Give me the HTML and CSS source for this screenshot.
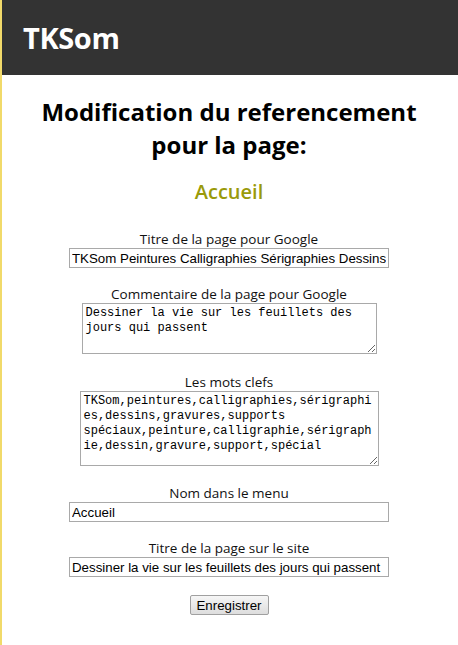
FILE: index.html
```html
<!DOCTYPE html>
<html lang="fr">
<head>
<meta charset="utf-8">
<title>TKSom</title>
<link rel="stylesheet" href="styles.css">
</head>
<body>
<div class="page">
  <header class="topbar"><span class="brand">TKSom</span></header>
  <main class="content">
    <h1 class="title">Modification du referencement<br>pour la page:</h1>
    <h2 class="pagename">Accueil</h2>
    <form class="form">
      <div class="field f1">
        <label class="lbl">Titre de la page pour Google</label>
        <input class="txt w320" type="text" value="TKSom Peintures Calligraphies Sérigraphies Dessins Gravures">
      </div>
      <div class="field f2">
        <label class="lbl">Commentaire de la page pour Google</label>
        <textarea class="area a1">Dessiner la vie sur les feuillets des jours qui passent</textarea>
      </div>
      <div class="field f3">
        <label class="lbl">Les mots clefs</label>
        <textarea class="area a2">TKSom,peintures,calligraphies,sérigraphies,dessins,gravures,supports spéciaux,peinture,calligraphie,sérigraphie,dessin,gravure,support,spécial</textarea>
      </div>
      <div class="field f4">
        <label class="lbl">Nom dans le menu</label>
        <input class="txt w320" type="text" value="Accueil">
      </div>
      <div class="field f5">
        <label class="lbl">Titre de la page sur le site</label>
        <input class="txt w320" type="text" value="Dessiner la vie sur les feuillets des jours qui passent">
      </div>
      <div class="field f6">
        <button class="btn" type="button">Enregistrer</button>
      </div>
    </form>
  </main>
</div>
</body>
</html>
```

FILE: styles.css
```css
html, body {
  margin: 0;
  padding: 0;
  background: #ffffff;
}
.page {
  min-height: 645px;
  border-left: 2px solid #f1da6a;
  font-family: "Open Sans", "Noto Sans", sans-serif;
  color: #000;
}
.topbar {
  height: 75px;
  background: #333333;
  display: flex;
  align-items: center;
  padding-left: 21px;
}
.brand {
  color: #ffffff;
  font-weight: 700;
  font-size: 29px;
  letter-spacing: -0.4px;
}
.content {
  display: flex;
  flex-direction: column;
  align-items: center;
  padding-right: 2px;
}
.title {
  margin: 20px 0 0 0;
  font-size: 24px;
  line-height: 33px;
  font-weight: 700;
  text-align: center;
}
.pagename {
  margin: 18px 0 0 0;
  font-size: 20px;
  line-height: 26px;
  font-weight: 600;
  color: #9a9a0a;
}
.form {
  display: flex;
  flex-direction: column;
  align-items: center;
  margin-top: 26px;
}
.field {
  display: flex;
  flex-direction: column;
  align-items: center;
}
.lbl {
  font-size: 13.5px;
  line-height: 17px;
  color: #111;
}
.f2 { margin-top: 18px; }
.f3 { margin-top: 20px; }
.f4 { margin-top: 19px; }
.f5 { margin-top: 18px; }
.f6 { margin-top: 18px; }
.txt {
  box-sizing: border-box;
  width: 320px;
  height: 20px;
  margin: 0;
  padding: 0 2px;
  border: 1px solid #a9a9a9;
  font-family: "Liberation Sans", Arial, sans-serif;
  font-size: 13.3px;
  color: #000;
  background: #fff;
}
.area {
  box-sizing: border-box;
  margin: 0;
  padding: 2px 3px;
  border: 1px solid #a9a9a9;
  font-family: "Liberation Mono", monospace;
  font-size: 12px;
  line-height: 15px;
  color: #000;
  resize: both;
  overflow: hidden;
}
.a1 { width: 295px; height: 51px; }
.a2 { width: 299px; height: 75px; }
.btn {
  box-sizing: border-box;
  width: 79px;
  height: 20px;
  padding: 0;
  font-family: "Liberation Sans", Arial, sans-serif;
  font-size: 13.3px;
  color: #000;
  background: linear-gradient(#f6f6f6, #dddddd);
  border: 1px solid #a0a0a0;
  border-radius: 2px;
}
```
